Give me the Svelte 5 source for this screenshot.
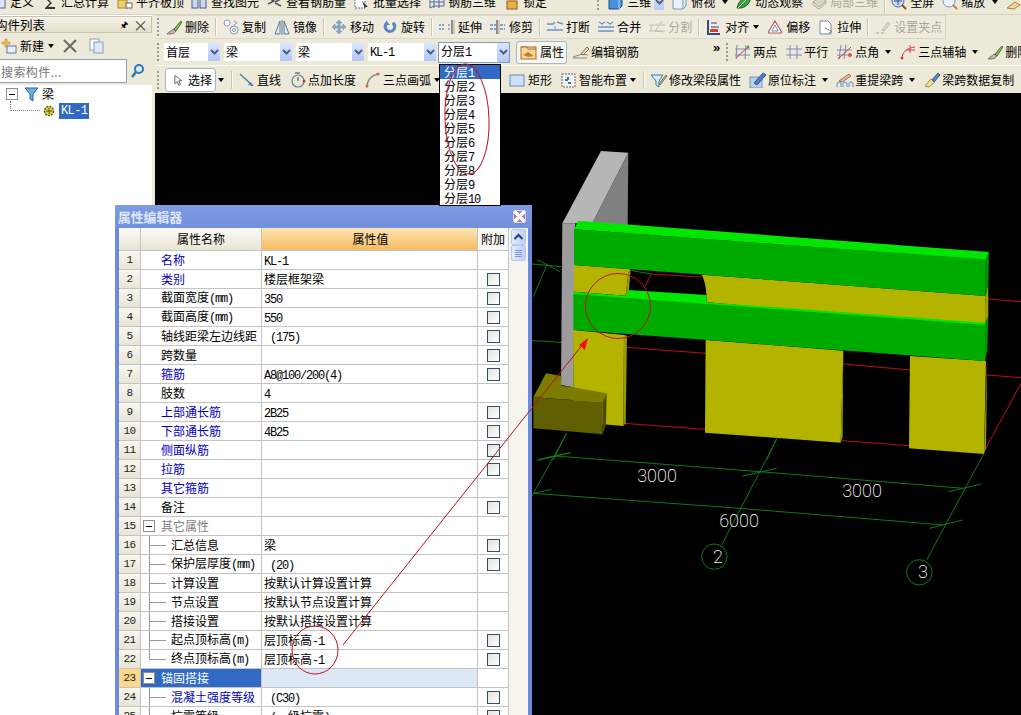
<script>
  const icons = {
    def: '<rect x="3" y="3" width="12" height="11" fill="#dde6f7" stroke="#4a68a8"/>',
    sum: '<path d="M4 3h9v2H7l4 4-4 4h7v2H4v-1l5-5-5-5z" fill="#333"/>',
    flat: '<rect x="2" y="6" width="9" height="8" fill="#f0d070" stroke="#a88020"/><path d="M5 2h8v4H5z" fill="#e8b040"/><rect x="10" y="9" width="6" height="5" fill="#fff" stroke="#666"/>',
    find: '<rect x="1" y="4" width="6" height="10" fill="#c8d8f0" stroke="#44598a"/><rect x="9" y="4" width="6" height="10" fill="#c8d8f0" stroke="#44598a"/><rect x="5" y="1" width="6" height="5" fill="#44598a"/>',
    rebar: '<path d="M2 4l6 3-6 3M9 8l6-3M9 9l6 3" stroke="#555" fill="none" stroke-width="1.5"/>',
    batch: '<rect x="2" y="2" width="10" height="12" fill="#fff" stroke="#4a68a8" stroke-dasharray="2 1"/><path d="M9 7l6 6-3 0 0 2z" fill="#333"/>',
    r3d: '<path d="M2 14V4l4-2h10v10H6zM6 2v12M2 8h14M11 2v12" fill="none" stroke="#4a68a8"/>',
    lock: '<rect x="4" y="7" width="10" height="8" fill="#e8b040" stroke="#8a6010"/>',
    cube: '<path d="M2 5l3-3h10v10l-3 3H2z" fill="#4a90d8" stroke="#1a4a90"/><path d="M2 5h10v10" fill="none" stroke="#bcdcff"/>',
    top: '<path d="M2 5l3-3h10v10l-3 3H2z" fill="#e8f0fa" stroke="#7a94b8"/><path d="M2 5h10v10M12 5l3-3" fill="none" stroke="#7a94b8"/>',
    orbit: '<path d="M2 14C4 6 9 2 16 1c0 7-4 12-10 13z" fill="#3aa040" stroke="#206028"/><path d="M3 14L14 3" stroke="#b0e0b0"/>',
    part: '<path d="M3 8l7-5 6 4-7 6z" fill="#d8d5c8" stroke="#aca899"/><path d="M3 8v3l6 4 7-6V7" fill="none" stroke="#aca899"/>',
    full: '<circle cx="8" cy="7" r="6" fill="#c8dcf8" stroke="#4a68a8"/><path d="M8 3v8M4 7h8" stroke="#304a88"/><path d="M12 11l4 4" stroke="#805020" stroke-width="2"/>',
    zoom: '<circle cx="8" cy="7" r="6" fill="#e8f0fc" stroke="#7a94b8"/><path d="M12 11l4 4" stroke="#c08030" stroke-width="2"/>',
    brush2: '<path d="M2 14l8-6 5 3-6 4z" fill="#f0d890" stroke="#a08840"/>',
    del: '<path d="M2 15c2-3 4-2 6-5l3 2c-2 3-5 3-9 3z" fill="#c8b8b0" stroke="#806868"/><path d="M9 10l7-8 1 1-6 9z" fill="#88b860" stroke="#4a7a30"/>',
    copy: '<circle cx="5" cy="4" r="3" fill="#fff" stroke="#8a9ab0"/><circle cx="12" cy="11" r="4" fill="#f8f8f8" stroke="#8a9ab0"/><circle cx="12" cy="11" r="1.5" fill="none" stroke="#8a9ab0"/><path d="M12 2l3 2-3 2" fill="none" stroke="#8a9ab0"/>',
    mirror: '<path d="M7 2L2 15h5z" fill="#dfe8f4" stroke="#5a7a9a"/><path d="M11 2l5 13h-5z" fill="#dfe8f4" stroke="#5a7a9a"/><path d="M9 1v15" stroke="#5a7a9a"/>',
    move: '<path d="M9 1l3 3h-2v3h3V5l3 3-3 3V9h-3v3h2l-3 3-3-3h2V9H5v2L2 8l3-3v2h3V4H6z" fill="#8fa8c8" stroke="#6a84a8" stroke-width=".5"/>',
    rotate: '<path d="M5 3a6 6 0 1 0 8 0l-2 2a3.500 3.500 0 1 1-4 0z" fill="#5a8ad0" stroke="#3a60a0" stroke-width=".5"/><path d="M5 1v5h4" fill="#5a8ad0"/>',
    extend: '<path d="M1 6h6M1 10h6" stroke="#5a8ad0" stroke-width="1.500" stroke-dasharray="2 1"/><path d="M10 6h2M10 10h2" stroke="#4a68a8"/><path d="M14 1v14" stroke="#333"/><path d="M16 1v14" stroke="#aaa"/>',
    trim: '<path d="M1 6h6M1 10h6M11 6h5M11 10h5" stroke="#5a8ad0" stroke-width="1.500" stroke-dasharray="3 1"/><path d="M8 1v14" stroke="#333"/><path d="M10 1v14" stroke="#aaa"/>',
    brk: '<path d="M1 5h6l2-2M11 3l6 2M1 11h16" stroke="#6a94c8" stroke-width="1.500" fill="none"/><path d="M9 7v3" stroke="#6a94c8"/>',
    merge: '<path d="M2 3l3 2 3-2M10 3l3 2 3-2M1 8h16M1 12h16" stroke="#6a94c8" stroke-width="1.300" fill="none"/>',
    split: '<path d="M1 6h16M1 12h16M3 6v6M14 2L7 12l8 1" stroke="#c0bdb0" fill="none"/><path d="M9 5l5-3 1 2-4 3z" fill="#d8d5c8"/>',
    align: '<path d="M3 1v14h12" stroke="#304a88" stroke-width="2" fill="none"/><path d="M6 4h6M6 8h8" stroke="#304a88"/><rect x="5" y="10" width="8" height="3" fill="#d84030"/>',
    offset: '<path d="M9 2l6 10a1 1 0 0 1-1 2H4a1 1 0 0 1-1-2z" fill="#fff" stroke="#b06060" stroke-width="1.200"/><path d="M9 6l3 6H6z" fill="none" stroke="#7090b0"/>',
    stretch: '<path d="M3 2h8l3 3v10H3z" fill="#fff" stroke="#7a8aa0"/><path d="M8 9l6 3M12 14l3-2" stroke="#555" stroke-dasharray="2 1"/>',
    grippt: '<path d="M2 14h3M7 14h3" stroke="#bdbaa8" stroke-width="1.500"/><path d="M8 11l6-8 2 2-6 7z" fill="#dedbcc" stroke="#bdbaa8"/>',
    prop: '<rect x="1" y="3" width="15" height="12" fill="#f8d890" stroke="#a07028"/><path d="M1 3h6l1 2h8" fill="#fff" stroke="#a07028"/><path d="M3 11l5-3 6 4-6 1z" fill="#c87838"/>',
    edit: '<path d="M1 13l9-3 6 1M1 14h14" stroke="#888" fill="none"/><path d="M9 10l6-7 2 2-6 6z" fill="#e8e0c8" stroke="#7a6a40"/>',
    twop: '<path d="M3 1l-1 14M12 1l-1 14M1 5h15M1 11h15" stroke="#7a8ab8"/><path d="M2 14L15 2" stroke="#c04040"/><circle cx="14" cy="3" r="1.500" fill="#50a050"/>',
    para: '<path d="M5 1v14M12 1v14M1 5h16M1 11h16" stroke="#7a8ab8"/>',
    ang: '<path d="M5 1L3 15M10 1L8 15M1 6h15M1 11h15" stroke="#7a8ab8"/><path d="M2 15L15 3" stroke="#d03030"/><circle cx="14" cy="11" r="2" fill="#e05050"/>',
    tri: '<path d="M3 15c0-7 5-11 13-12M11 1v8M7 6h9" stroke="#d04050" fill="none"/><circle cx="3" cy="14" r="1.500" fill="#d04050"/>',
    sel: '<path d="M5 2v11l3-3 2 5 2-1-2-5h4z" fill="#fff" stroke="#445"/>',
    line: '<path d="M2 2l13 12" stroke="#5a7aa8" stroke-width="1.500"/><path d="M15 14l-5-1 3-3z" fill="#5a7aa8"/>',
    ptlen: '<circle cx="9" cy="9" r="6" fill="none" stroke="#6a8098" stroke-width="1.200"/><path d="M9 9V5M6 1h5" stroke="#444"/><circle cx="15" cy="9" r="1.500" fill="#c04040"/>',
    arc: '<path d="M3 15C3 8 8 3 14 2" fill="none" stroke="#888" stroke-width="1.500"/><circle cx="3" cy="14" r="1.500" fill="#d06050"/><circle cx="14" cy="2" r="1.500" fill="#d06050"/>',
    rect: '<rect x="1" y="3" width="14" height="11" fill="#cfe0f8" stroke="#6a8ab8"/>',
    smart: '<rect x="2" y="2" width="13" height="13" fill="#f4f4ec" stroke="#666" stroke-dasharray="2 1"/><path d="M8 5v3M5 8h3M11 11h-3" stroke="#3a70c0" stroke-width="2"/>',
    funnel: '<path d="M1 3h12l-4 6v6l-3-2V9z" fill="#d8ecf8" stroke="#2a80a8"/><path d="M9 12l7-9 1 1-7 9z" fill="#d8c890" stroke="#807040"/>',
    mark: '<rect x="1" y="5" width="12" height="11" fill="#b8d0ec" stroke="#7a94b8"/><path d="M5 11l9-10 3 2-9 10z" fill="#4a80c8" stroke="#305a98"/>',
    span: '<path d="M1 15v-3a2 2 0 0 1 4 0v3M7 15v-3a2 2 0 0 1 4 0v3M13 15v-3a2 2 0 0 1 4 0v3" stroke="#5a90c8" fill="none"/><path d="M3 9l10-7 2 2-9 6z" fill="#e8b8a0" stroke="#a07060"/>',
    sweep: '<path d="M2 14l6-7 4 3-6 5z" fill="#f0e0a0" stroke="#a89040"/><path d="M9 8l6-7 2 2-6 7z" fill="#5a8ac8" stroke="#305a98"/>',
    tree: '<path d="M2 2h13L10 8v7L7 13V8z" fill="#6ab0e0" stroke="#1a6aa0"/>',
    add: '<path d="M5 1h2v3h3v2H7v3H5V6H2V4h3z" fill="#f0c040" stroke="#a88020" stroke-width=".5"/><rect x="7" y="8" width="9" height="7" fill="#e8f0fa" stroke="#5a7aa8"/>',
    cross: '<path d="M2 2l12 12M14 2L2 14" stroke="#6a6a6a" stroke-width="2"/>',
    dup: '<rect x="2" y="1" width="9" height="11" fill="#fff" stroke="#8aa0c0"/><rect x="6" y="4" width="9" height="11" fill="#dce8f8" stroke="#8aa0c0"/>'
  };

  const top1 = [
    { i: 'def', t: '定义' }, { i: 'sum', t: '汇总计算' }, { i: 'flat', t: '平齐板顶' },
    { i: 'find', t: '查找图元' }, { i: 'rebar', t: '查看钢筋量' }, { i: 'batch', t: '批量选择' },
    { i: 'r3d', t: '钢筋三维' }, { i: 'lock', t: '锁定' }
  ];
  const top2 = [
    { i: 'top', t: '俯视', a: 'wide' }, { i: 'orbit', t: '动态观察' }, { i: 'part', t: '局部三维', off: true },
    { sep: true }, { i: 'full', t: '全屏' }, { i: 'zoom', t: '缩放', a: 'wide' }, { i: 'brush2', t: '' }
  ];
  const row1 = [
    { i: 'del', t: '删除' }, { sep: true }, { i: 'copy', t: '复制' }, { i: 'mirror', t: '镜像' }, { sep: true },
    { i: 'move', t: '移动' }, { i: 'rotate', t: '旋转' }, { sep: true },
    { i: 'extend', t: '延伸' }, { i: 'trim', t: '修剪' }, { sep: true },
    { i: 'brk', t: '打断' }, { i: 'merge', t: '合并' }, { i: 'split', t: '分割', off: true }, { sep: true },
    { i: 'align', t: '对齐', a: 'thin' }, { i: 'offset', t: '偏移' }, { i: 'stretch', t: '拉伸' }, { sep: true },
    { i: 'grippt', t: '设置夹点', off: true }
  ];
  const row2b = [
    { i: 'twop', t: '两点' }, { i: 'para', t: '平行' }, { i: 'ang', t: '点角', a: 'wide' },
    { i: 'tri', t: '三点辅轴', a: 'wide' }, { i: 'del', t: '删除' }
  ];
  const row3a = [
    { i: 'line', t: '直线' }, { i: 'ptlen', t: '点加长度' }, { i: 'arc', t: '三点画弧', a: 'thin' }
  ];
  const row3b = [
    { i: 'rect', t: '矩形' }, { i: 'smart', t: '智能布置', a: 'thin' }, { sep: true },
    { i: 'funnel', t: '修改梁段属性' }, { i: 'mark', t: '原位标注', a: 'wide' },
    { i: 'span', t: '重提梁跨', a: 'wide' }, { i: 'sweep', t: '梁跨数据复制' }
  ];
  const combos = [
    { v: '首层', c: 'c1' }, { v: '梁', c: 'c2' }, { v: '梁', c: 'c2' }, { v: 'KL-1', c: 'c2' }, { v: '分层1', c: 'c3' }
  ];
  const floors = [1, 2, 3, 4, 5, 6, 7, 8, 9, 10];

  const rows = [
    { n: '名称', v: 'KL-1', blue: true, nobox: true },
    { n: '类别', v: '楼层框架梁', blue: true },
    { n: '截面宽度(mm)', v: '350' },
    { n: '截面高度(mm)', v: '550' },
    { n: '轴线距梁左边线距', v: ' (175)' },
    { n: '跨数量', v: '' },
    { n: '箍筋', v: 'A8@100/200(4)', blue: true },
    { n: '肢数', v: '4', nobox: true },
    { n: '上部通长筋', v: '2B25', blue: true },
    { n: '下部通长筋', v: '4B25', blue: true },
    { n: '侧面纵筋', v: '', blue: true },
    { n: '拉筋', v: '', blue: true },
    { n: '其它箍筋', v: '', blue: true, nobox: true },
    { n: '备注', v: '' },
    { n: '其它属性', v: '', group: true, nobox: true },
    { n: '汇总信息', v: '梁', child: true },
    { n: '保护层厚度(mm)', v: ' (20)', child: true },
    { n: '计算设置', v: '按默认计算设置计算', child: true, nobox: true },
    { n: '节点设置', v: '按默认节点设置计算', child: true, nobox: true },
    { n: '搭接设置', v: '按默认搭接设置计算', child: true, nobox: true },
    { n: '起点顶标高(m)', v: '层顶标高-1', child: true },
    { n: '终点顶标高(m)', v: '层顶标高-1', child: true, last: true },
    { n: '锚固搭接', v: '', group: true, sel: true, nobox: true },
    { n: '混凝土强度等级', v: ' (C30)', child: true, blue: true },
    { n: '抗震等级', v: ' (一级抗震)', child: true }
  ];
</script>

{#snippet tx(s)}{#each s.split(/([\x00-\x7f]+)/) as p, i}{#if i % 2}<span class="lat">{p}</span>{:else}{p}{/if}{/each}{/snippet}

{#snippet ico(name)}
  <svg class="ico" viewBox="0 0 18 16">{@html icons[name]}</svg>
{/snippet}

{#snippet bar(items)}
  {#each items as it}
    {#if it.sep}
      <span class="sep"></span>
    {:else}
      <span class="tool" class:off={it.off}>
        {@render ico(it.i)}
        {#if it.t}<span>{it.t}</span>{/if}
        {#if it.a}<span class="caret {it.a}"></span>{/if}
      </span>
    {/if}
  {/each}
{/snippet}

<div class="app">
  <header class="topbar">
    <div class="first">{@render bar(top1)}</div>
    <span class="grip low"></span>
    <span class="tool">{@render ico('cube')}<span>三维</span><span class="combo-arrow small"></span></span>
    {@render bar(top2)}
  </header>

  <div class="body">
    <aside class="panel">
      <div class="panel-head">
        <span class="panel-title">构件列表</span>
        <span class="pin">🖈</span>
        <span class="close">×</span>
      </div>
      <div class="panel-tools">
        <span class="tool">{@render ico('add')}<span>新建</span><span class="caret thin"></span></span>
        {@render ico('cross')}
        {@render ico('dup')}
      </div>
      <div class="search">
        <span class="search-box">搜索构件...</span>
        <span class="search-btn">
          <svg width="16" height="16" viewBox="0 0 16 16"><circle cx="9" cy="6" r="4" fill="#dff0fb" stroke="#2a7ab8" stroke-width="2"/><path d="M6 9l-4 5" stroke="#2a7ab8" stroke-width="2.500"/></svg>
        </span>
      </div>
      <div class="tree">
        <div class="node">
          <span class="minus tree-minus"></span>
          {@render ico('tree')}
          <span class="node-label">梁</span>
        </div>
        <div class="node leaf">
          <span class="dots"></span>
          <svg width="14" height="14" viewBox="0 0 14 14"><circle cx="7" cy="7" r="4.500" fill="#e8d040" stroke="#5a5a10" stroke-width="1.500" stroke-dasharray="2 1"/><path d="M4 7h6M7 4v6" stroke="#5a5a10"/></svg>
          <span class="picked">KL-1</span>
        </div>
      </div>
    </aside>

    <main class="work">
      <div class="tb row1">
        <span class="grip"></span>
        {@render bar(row1)}
      </div>
      <div class="tb row2">
        <span class="grip"></span>
        {#each combos as c}
          <span class="combo {c.c}"><span class="combo-val">{@render tx(c.v)}</span><span class="combo-arrow"></span></span>
        {/each}
        <span class="tool pressed">{@render ico('prop')}<span>属性</span></span>
        <span class="tool edit">{@render ico('edit')}<span>编辑钢筋</span></span>
        <span class="more">»</span>
        <span class="grip"></span>
        {@render bar(row2b)}
      </div>
      <div class="tb row3">
        <span class="grip"></span>
        <span class="tool pressed select">{@render ico('sel')}<span>选择</span></span>
        <span class="caret thin"></span>
        <span class="sep"></span>
        {@render bar(row3a)}
        <span class="hidden-gap"></span>
        {@render bar(row3b)}
      </div>
      <div class="canvas"></div>
    </main>
  </div>

  <svg class="scene" viewBox="0 0 1021 715">
    <g transform="translate(530 140) scale(.33333)">
      <g stroke="#0f7a1a" stroke-width="3" fill="none">
        <path d="M5 372L95 380M20 358L90 395M52 372L10 470M5 602L95 607M110 878L70 960M740 895L710 960M25 958L120 938"/>
      </g>
      <g stroke="#c01018" stroke-width="3" fill="none">
        <path d="M287 622L527 640M940 672L1140 690M283 850L525 868M935 902L1137 917M1375 477L1473 485M1370 705L1473 713M1362 935L1473 730M365 402L515 411M345 440L365 402"/>
      </g>
      <path d="M305 392L365 402" stroke="#0f7a1a" stroke-width="3"/>

      <path d="M97 250L213 33L295 38L187 250Z" fill="#b6b6b6"/>
      <path d="M295 38L293 260L187 250Z" fill="#808080"/>
      <path d="M97 250L135 250L130 742L93 735Z" fill="#9c9c9c"/>

      <path d="M132 375L302 388L295 400L287 467L132 455Z" fill="#b4b400"/>
      <path d="M295 400L302 388L297 450L287 467Z" fill="#9a9a00"/>
      <path d="M515 404Q530 430 530 487L1367 560L1367 468Z" fill="#b4b400"/>
      <path d="M1367 468L1375 430L1375 530L1365 548Z" fill="#a0a000"/>

      <path d="M130 570L282 585L280 858L130 845Z" fill="#b4b400"/>
      <path d="M282 585L291 587L287 850L280 858Z" fill="#9a9a00"/>
      <path d="M527 600L940 632L932 908L525 878Z" fill="#b4b400"/>
      <path d="M940 632L932 908L938 890Z" fill="#9a9a00"/>
      <path d="M1140 648L1368 663L1362 942L1137 925Z" fill="#b4b400"/>
      <path d="M1372 640L1362 942L1368 925Z" fill="#9a9a00"/>

      <path d="M145 242L1377 336L1367 360L132 268Z" fill="#00e600"/>
      <path d="M132 268L1367 358L1367 468L132 375Z" fill="#00ab00"/>
      <path d="M1367 360L1377 336L1375 430L1367 468Z" fill="#009600"/>

      <path d="M130 455L287 467L295 450L530 465L530 487L1365 548L1365 560L130 465Z" fill="#00e600"/>
      <path d="M130 462L1365 555L1365 663L130 570Z" fill="#00ab00"/>
      <path d="M1365 548L1375 530L1372 630L1365 663Z" fill="#009600"/>

      <path d="M10 772L48 700L95 708L93 737L130 742L230 760L218 787Z" fill="#7b7b00"/>
      <path d="M10 772L218 787L218 883L10 865Z" fill="#5f5f00"/>
      <path d="M218 787L230 760L228 855L218 883Z" fill="#4c4c00"/>
    </g>
    <g transform="translate(530 430) scale(.33333)" stroke="#0f7a1a" stroke-width="3" fill="none">
      <path d="M110 10L5 200M20 92L122 68M75 78L690 125L1300 175M638 138L740 115M1255 185L1355 162"/>
      <path d="M10 190L630 235L1240 285M10 190L65 178M1198 295L1298 270"/>
      <path d="M740 28L575 345M1362 70L1190 390"/>
      <circle cx="553" cy="380" r="38"/>
      <circle cx="1168" cy="427" r="38"/>
    </g>
    <g class="dim">
      <text x="657" y="482">3000</text>
      <text x="862" y="497">3000</text>
      <text x="739" y="527">6000</text>
      <text x="718" y="563">2</text>
      <text x="923" y="578">3</text>
    </g>
  </svg>

  <section class="win">
    <div class="win-title">
      <span>属性编辑器</span>
      <button class="win-close" aria-label="关闭"></button>
    </div>
    <div class="win-body">
      <div class="grid">
        <div class="line head">
          <span class="num"></span>
          <span class="name">属性名称</span>
          <span class="val">属性值</span>
          <span class="extra">附加</span>
        </div>
        {#each rows as r, i}
          <div class="line" class:sel={r.sel}>
            <span class="num">{i + 1}</span>
            <span class="name" class:blue={r.blue} class:muted={r.group && !r.sel} class:grouped={r.group}>
              {#if r.group}<span class="minus"></span>{/if}
              {#if r.child}<span class="branch" class:last={r.last}></span>{/if}
              <span class:plain={!r.group && !r.child}>{@render tx(r.n)}</span>
            </span>
            <span class="val">{@render tx(r.v)}</span>
            <span class="extra">{#if !r.nobox}<span class="check"></span>{/if}</span>
          </div>
        {/each}
      </div>
      <div class="scroll">
        <span class="sb-btn"><svg width="11" height="8" viewBox="0 0 11 8"><path d="M1.500 6L5.500 2L9.500 6" fill="none" stroke="#2a3f7a" stroke-width="2"/></svg></span>
        <span class="sb-thumb"></span>
      </div>
    </div>
  </section>

  <ul class="drop">
    {#each floors as f, i}
      <li class:on={i === 0}>分层<span class="lat">{f}</span></li>
    {/each}
  </ul>

  <svg class="marks" viewBox="0 0 1021 715">
    <g fill="none" stroke="#c01020">
      <path d="M343 645L587 339"/>
      <circle cx="618" cy="306" r="32.500"/>
      <ellipse cx="315" cy="650" rx="23" ry="24"/>
      <ellipse cx="467" cy="119" rx="22" ry="55" transform="rotate(-2 467 119)"/>
    </g>
    <path d="M588 338L579 345L585 350Z" fill="#f01010"/>
  </svg>
</div>

<style>
  :global(body) {
    margin: 0;
    background: #000;
  }
  .app {
    position: relative;
    width: 1021px;
    height: 715px;
    overflow: hidden;
    background: #ece9d8;
    color: #000;
    font: 12px/16px "Noto Sans CJK SC", "Liberation Sans", sans-serif;
  }
  .lat {
    font-family: "Liberation Mono", monospace;
    letter-spacing: -1.2px;
  }
  .ico {
    width: 18px;
    height: 16px;
    flex: none;
  }

  .topbar {
    height: 14px;
    display: flex;
    align-items: flex-end;
    gap: 7px;
    overflow: hidden;
    border-bottom: 1px solid #d8d4c0;
    white-space: nowrap;
  }
  .topbar > * {
    margin-bottom: 4px;
  }
  .first {
    display: flex;
    gap: 7px;
    margin-left: -10px;
  }
  .low {
    margin-left: 43px;
    height: 16px;
  }

  .tool {
    display: inline-flex;
    align-items: center;
    gap: 2px;
    flex: none;
    white-space: nowrap;
  }
  .off {
    color: #aca899;
  }
  .caret {
    width: 0;
    height: 0;
    border: 3.5px solid transparent;
    border-top: 4px solid #000;
    border-bottom: 0;
    flex: none;
  }
  .caret.thin {
    margin-left: 2px;
  }
  .caret.wide {
    margin-left: 5px;
  }
  .sep {
    width: 1px;
    height: 18px;
    background: #c9c5b0;
    box-shadow: 1px 0 #fbfaf4;
    margin: 0 -1.5px;
    flex: none;
  }
  .grip {
    width: 3px;
    height: 18px;
    flex: none;
    background: radial-gradient(circle at 1px 1px, #9a9a8a 1px, transparent 1.2px) 0 0 / 3px 4px;
  }

  .body {
    display: grid;
    grid-template-columns: 155px 1fr;
    height: 700px;
  }
  .panel {
    background: #fff;
    border-right: 3px solid #ece9d8;
    box-sizing: border-box;
    width: 155px;
  }
  .panel-head {
    height: 17px;
    margin-top: 1px;
    display: flex;
    align-items: center;
    background: linear-gradient(#f6f5ec, #e2dec8);
    border: 1px solid #c8c5b2;
    border-left: 0;
    box-sizing: border-box;
    overflow: hidden;
  }
  .panel-title {
    margin-left: -5px;
    flex: 1;
    font-size: 12.5px;
  }
  .pin {
    font-size: 9px;
    width: 18px;
    text-align: center;
  }
  .close {
    font-size: 15px;
    width: 18px;
    color: #444;
  }
  .panel-tools {
    height: 25px;
    display: flex;
    align-items: center;
    gap: 8px;
    background: #ece9d8;
  }
  .search {
    height: 27px;
    display: flex;
    align-items: center;
    gap: 2px;
    background: #ece9d8;
    padding-bottom: 2px;
    box-sizing: border-box;
  }
  .search-box {
    width: 127px;
    height: 24px;
    line-height: 23px;
    box-sizing: border-box;
    background: #fff;
    border: 1px solid #8ba0b4;
    border-left: 0;
    color: #777;
    padding-left: 1px;
    letter-spacing: .4px;
  }
  .search-btn {
    width: 18px;
    height: 18px;
    display: flex;
    align-items: center;
    justify-content: center;
  }
  .tree {
    padding-top: 1px;
  }
  .node {
    display: flex;
    align-items: center;
    height: 16px;
  }
  .tree-minus {
    margin: 0 5px 0 6px;
  }
  .node-label {
    margin-left: 1px;
  }
  .leaf {
    height: 17px;
  }
  .dots {
    width: 30px;
    height: 10px;
    margin: -10px 2px 0 10px;
    border-left: 1px dotted #888;
    border-bottom: 1px dotted #888;
    box-sizing: border-box;
  }
  .picked {
    margin-left: 3px;
    padding: 0 2px;
    background: #316ac5;
    color: #fff;
    font-family: "Liberation Mono", monospace;
    letter-spacing: -.6px;
    line-height: 16px;
  }
  .minus {
    width: 10px;
    height: 10px;
    flex: none;
    border: 1px solid #8f8f8f;
    background:
      linear-gradient(#000, #000) center / 6px 1px no-repeat,
      #fff;
  }

  .work {
    display: flex;
    flex-direction: column;
    min-width: 0;
    overflow: hidden;
  }
  .tb {
    flex: none;
    display: flex;
    align-items: center;
    gap: 8px;
    padding-left: 2px;
    white-space: nowrap;
    overflow: hidden;
    border-bottom: 1px solid #f8f7f0;
    box-sizing: border-box;
  }
  .row1 {
    height: 24px;
    width: 791px;
    gap: 7px;
    background: #efecdf;
    border: 1px solid #dcd8c6;
    border-left: 0;
  }
  .row1 > .grip {
    margin-right: -2px;
  }
  .row1 > .sep {
    margin: 0 -1px;
  }
  .row2 {
    height: 27px;
    gap: 4px;
  }
  .row2 > .tool {
    margin-left: 4px;
    gap: 1px;
  }
  .row2 > .pressed {
    margin-left: 2px;
    gap: 2px;
  }
  .row2 > .edit {
    margin-left: 1px;
  }
  .row2 > .grip:not(:first-child) {
    margin-right: -3px;
  }
  .row3 {
    height: 27px;
    border-bottom: 0;
  }
  .row3 > .tool {
    gap: 1px;
  }
  .combo {
    height: 18px;
    display: flex;
    align-items: center;
    background: #fff;
    flex: none;
  }
  .combo-val {
    flex: 1;
    padding-left: 2px;
  }
  .c1 {
    width: 56px;
  }
  .c2 {
    width: 68px;
  }
  .c3 {
    width: 72px;
    height: 21px;
    margin-left: -2px;
    border: 1px solid #7f9db9;
    box-sizing: border-box;
  }
  .combo-arrow {
    width: 12px;
    height: 100%;
    flex: none;
    background:
      url("data:image/svg+xml,%3Csvg xmlns='http://www.w3.org/2000/svg' width='9' height='6'%3E%3Cpath d='M1 1l3.500 3.500L8 1' fill='none' stroke='%234d6185' stroke-width='2'/%3E%3C/svg%3E") center no-repeat,
      linear-gradient(#dbe6fd, #b3c8f5);
  }
  .combo-arrow.small {
    display: inline-block;
    width: 10px;
    height: 16px;
    margin-left: 1px;
  }
  .pressed {
    height: 21px;
    padding: 0 2px 0 3px;
    border: 1px solid #a8b4c4;
    border-radius: 3px;
    background: #f7f6ef;
  }
  .row3 > .select {
    gap: 3px;
    padding: 0 3px 0 5px;
    margin-left: -3px;
    background: #fff;
    height: 22px;
  }
  .select .ico {
    width: 14px;
  }
  .row3 > .caret {
    margin-left: -6px;
  }
  .more {
    margin-left: 70px;
    margin-right: 2px;
    font: bold 13px/12px "Liberation Sans", sans-serif;
    margin-top: -8px;
  }
  .hidden-gap {
    width: 53px;
    flex: none;
  }
  .canvas {
    flex: 1;
    background: #000;
  }

  .scene {
    position: absolute;
    left: 0;
    top: 0;
    width: 1021px;
    height: 715px;
    pointer-events: none;
  }
  .dim text {
    fill: #fff;
    font: 200 18px Roboto, "Liberation Sans", sans-serif;
    text-anchor: middle;
  }

  .drop {
    position: absolute;
    left: 439px;
    top: 64px;
    width: 62px;
    box-sizing: border-box;
    margin: 0;
    padding: 0;
    list-style: none;
    background: #fff;
    border: 1px solid #000;
  }
  .drop li {
    height: 14px;
    line-height: 14px;
    padding-left: 4px;
  }
  .drop .on {
    background: #316ac5;
    color: #fff;
  }

  .win {
    position: absolute;
    left: 115px;
    top: 205px;
    width: 417px;
    height: 540px;
    box-sizing: border-box;
    background: #6f8ada;
    padding: 0 4px;
  }
  .win-title {
    height: 23px;
    display: flex;
    align-items: center;
    justify-content: space-between;
    background: linear-gradient(#7f9be4, #7390dd);
    margin: 0 -4px;
    padding: 0 6px 0 3px;
    color: #dfe8fa;
    font-size: 12.800px;
    font-weight: 700;
  }
  .win-close {
    width: 13px;
    height: 13px;
    padding: 0;
    border: 1px solid #d8cfe0;
    border-radius: 2px;
    background:
      linear-gradient(45deg, transparent 40%, #fff 40%, #fff 60%, transparent 60%),
      linear-gradient(-45deg, transparent 40%, #fff 40%, #fff 60%, transparent 60%),
      #b07f9c;
  }
  .win-body {
    display: flex;
    background: #fff;
    height: 520px;
  }
  .grid {
    width: 390px;
    flex: none;
  }
  .line {
    display: grid;
    grid-template-columns: 22px 121px 216px 31px;
    height: 19px;
    box-sizing: border-box;
    border-bottom: 1px solid #c4c4c4;
    line-height: 18px;
    white-space: nowrap;
  }
  .line > span {
    border-right: 1px solid #c4c4c4;
    box-sizing: border-box;
    overflow: hidden;
  }
  .num {
    background: linear-gradient(#f8f7f0, #e8e5d6);
    text-align: center;
    color: #222;
    font-family: "Liberation Mono", monospace;
    font-size: 11px;
    letter-spacing: -.6px;
  }
  .name {
    display: flex;
    align-items: center;
  }
  .plain {
    padding-left: 20px;
  }
  .blue {
    color: #0000c0;
  }
  .muted {
    color: #808080;
  }
  .grouped .minus {
    margin: 0 6px 0 2px;
  }
  .branch {
    width: 30px;
    height: 19px;
    flex: none;
    background:
      linear-gradient(#999, #999) 8px 0 / 1px 100% no-repeat,
      linear-gradient(#999, #999) 8px 9px / 17px 1px no-repeat;
  }
  .branch.last {
    background:
      linear-gradient(#999, #999) 8px 0 / 1px 10px no-repeat,
      linear-gradient(#999, #999) 8px 9px / 17px 1px no-repeat;
  }
  .val {
    padding-left: 2px;
    white-space: pre;
  }
  .extra {
    display: flex;
    align-items: center;
    justify-content: center;
  }
  .check {
    width: 13px;
    height: 13px;
    box-sizing: border-box;
    border: 1px solid #2f5168;
    background: linear-gradient(135deg, #e4e2d8, #fff);
  }
  .head {
    height: 23px;
    line-height: 22px;
    text-align: center;
  }
  .head .num,
  .head .name {
    background: linear-gradient(#fbfaf4, #e8e5d6);
  }
  .head .name {
    justify-content: center;
  }
  .head .val {
    background: linear-gradient(#fde6b4, #f6bb62);
  }
  .head .extra {
    background: #f7f6ef;
  }
  .sel .num {
    background: #fbd789;
  }
  .sel .name {
    background: #316ac5;
    color: #fff;
  }
  .sel .val {
    background: #dde7f5;
  }
  .scroll {
    flex: 1;
    display: flex;
    flex-direction: column;
    align-items: center;
    padding-top: 1px;
    background: #f5f5ee;
  }
  .sb-btn,
  .sb-thumb {
    width: 15px;
    height: 16px;
    flex: none;
    box-sizing: border-box;
    border: 1px solid #b5c8ef;
    border-radius: 2px;
    background: linear-gradient(90deg, #e2ebfd, #bfd0f6);
    display: flex;
    align-items: center;
    justify-content: center;
  }
  .sb-thumb {
    background:
      repeating-linear-gradient(#7f98d0 0 1px, transparent 1px 2px) center / 7px 7px no-repeat,
      linear-gradient(90deg, #e2ebfd, #bfd0f6);
  }

  .marks {
    position: absolute;
    left: 0;
    top: 0;
    width: 1021px;
    height: 715px;
    pointer-events: none;
  }
</style>
